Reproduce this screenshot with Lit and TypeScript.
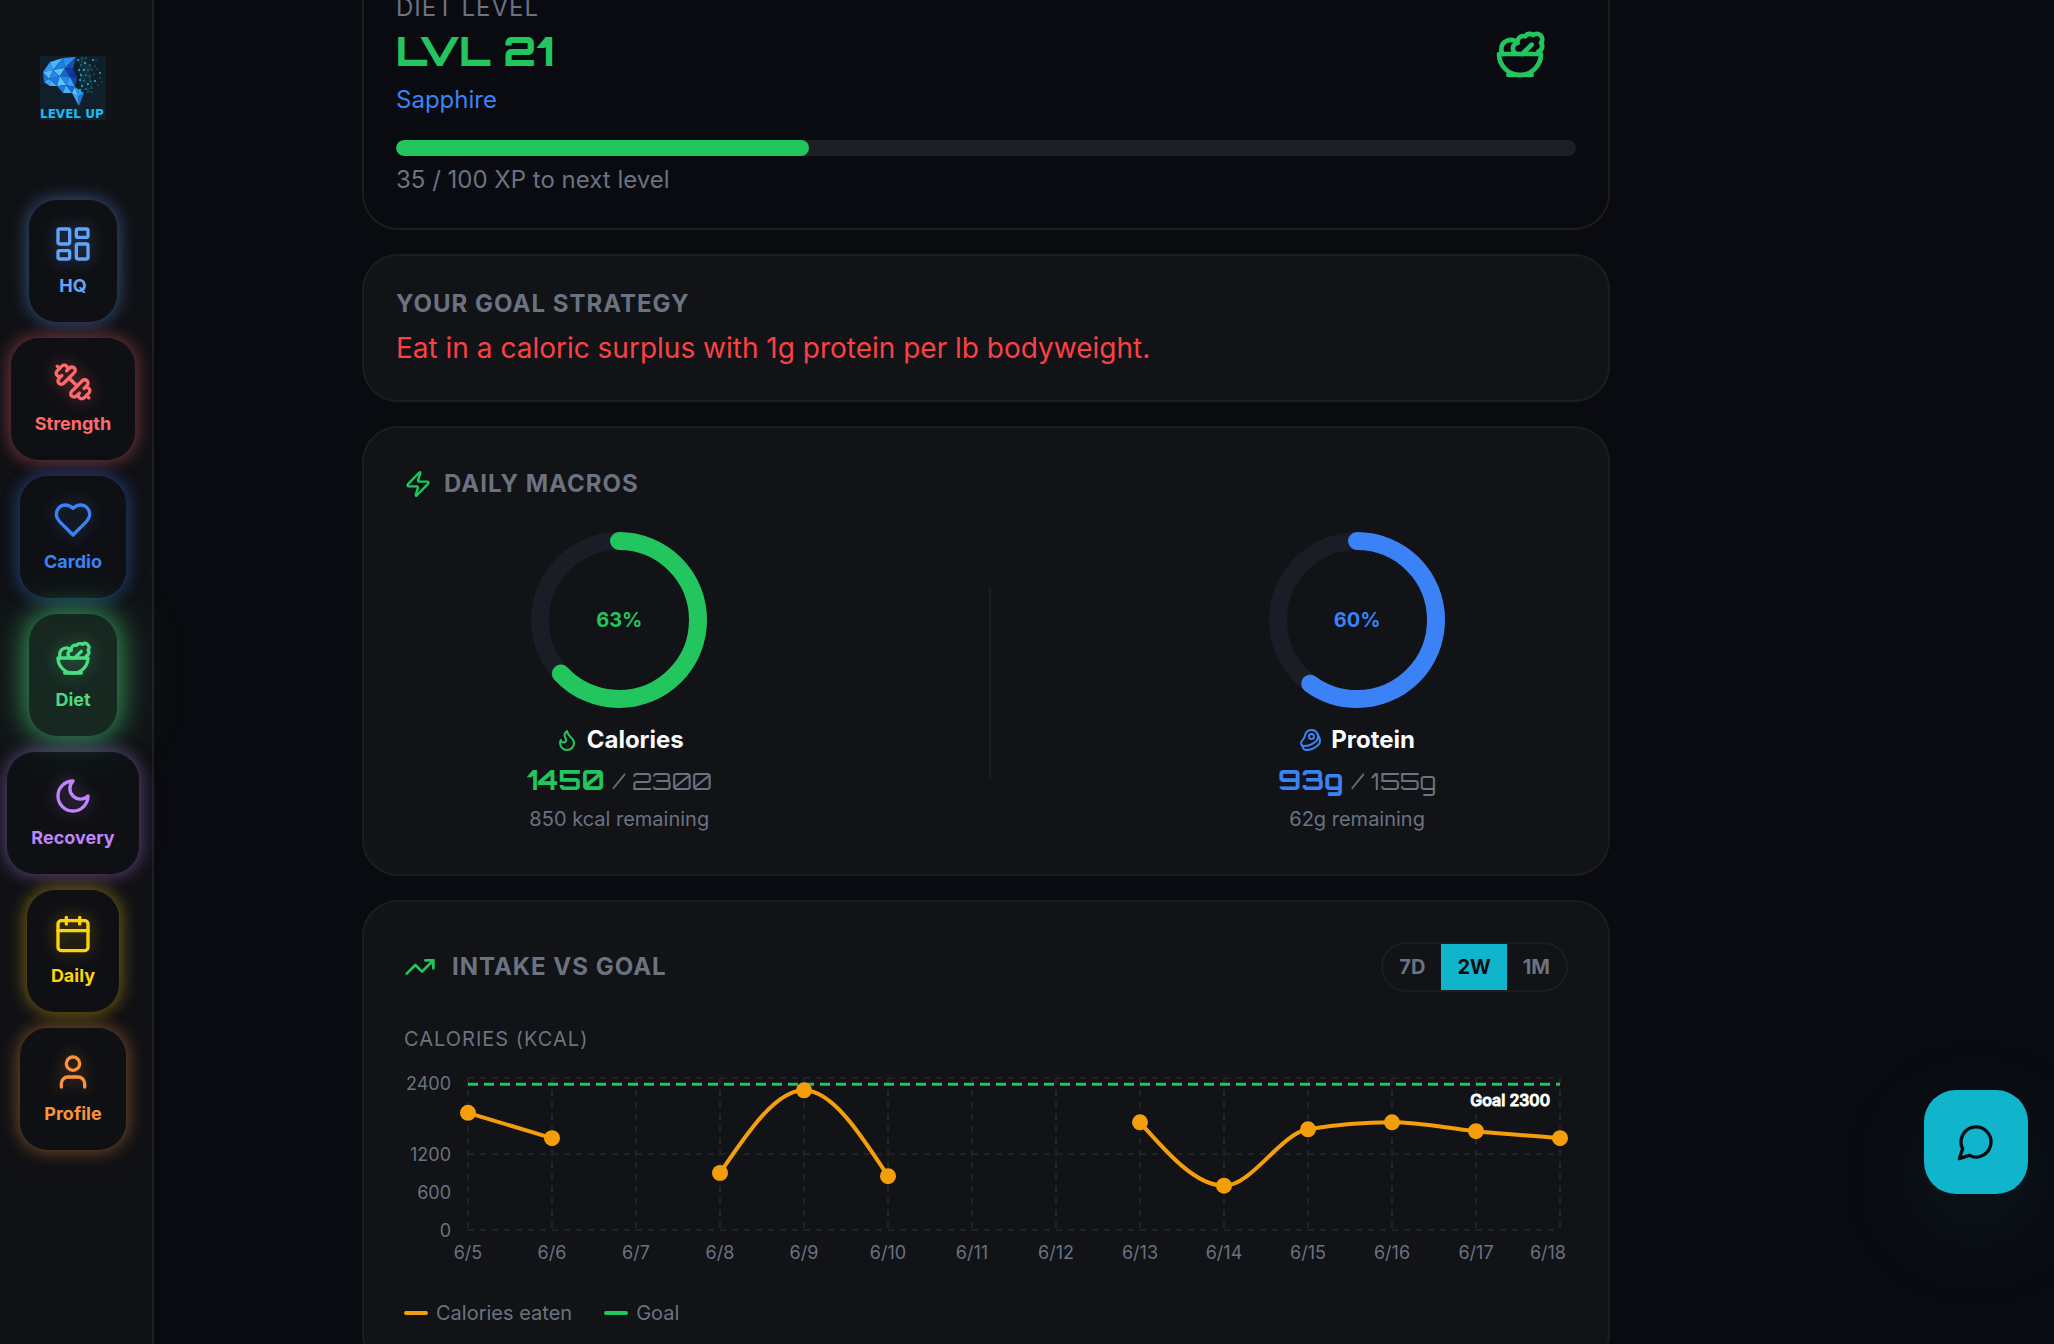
import { LitElement, html, svg, css, type SVGTemplateResult } from "lit";
import { customElement, property, state } from "lit/decorators.js";
import { classMap } from "lit/directives/class-map.js";

/* ---------- icons (24-unit grid, stroked) ---------- */

const icons: Record<string, SVGTemplateResult> = {
  dashboard: svg`<rect x="3" y="3" width="7" height="9" rx="1"/><rect x="14" y="3" width="7" height="5" rx="1"/><rect x="14" y="12" width="7" height="9" rx="1"/><rect x="3" y="16" width="7" height="5" rx="1"/>`,
  dumbbell: svg`<path d="M14.4 14.4 9.6 9.6"/><path d="M18.657 21.485a2 2 0 1 1-2.829-2.828l-1.767 1.768a2 2 0 1 1-2.829-2.829l6.364-6.364a2 2 0 1 1 2.829 2.829l-1.768 1.767a2 2 0 1 1 2.828 2.829z"/><path d="m21.5 21.5-1.4-1.4"/><path d="M3.9 3.9 2.5 2.5"/><path d="M6.404 12.768a2 2 0 1 1-2.829-2.829l1.768-1.767a2 2 0 1 1-2.828-2.829l2.828-2.828a2 2 0 1 1 2.829 2.828l1.767-1.768a2 2 0 1 1 2.829 2.829z"/>`,
  heart: svg`<path d="M19 14c1.49-1.46 3-3.21 3-5.5A5.5 5.5 0 0 0 16.5 3c-1.76 0-3 .5-4.5 2-1.5-1.5-2.74-2-4.5-2A5.5 5.5 0 0 0 2 8.5c0 2.3 1.5 4.05 3 5.5l7 7Z"/>`,
  salad: svg`<path d="M7 21h10"/><path d="M12 21a9 9 0 0 0 9-9H3a9 9 0 0 0 9 9Z"/><path d="M11.38 12a2.4 2.4 0 0 1-.4-4.77 2.4 2.4 0 0 1 3.2-2.77 2.4 2.4 0 0 1 3.47-.63 2.4 2.4 0 0 1 3.37 3.37 2.4 2.4 0 0 1-1.1 3.7 2.51 2.51 0 0 1 .03 1.1"/><path d="m13 12 4-4"/><path d="M10.9 7.25A3.99 3.99 0 0 0 4 10c0 .73.2 1.41.54 2"/>`,
  moon: svg`<path d="M12 3a6 6 0 0 0 9 9 9 9 0 1 1-9-9Z"/>`,
  calendar: svg`<path d="M8 2v4"/><path d="M16 2v4"/><rect x="3" y="4" width="18" height="18" rx="2"/><path d="M3 10h18"/>`,
  user: svg`<path d="M19 21v-2a4 4 0 0 0-4-4H9a4 4 0 0 0-4 4v2"/><circle cx="12" cy="7" r="4"/>`,
  zap: svg`<path d="M4 14a1 1 0 0 1-.78-1.63l9.9-10.2a.5.5 0 0 1 .86.46l-1.92 6.02A1 1 0 0 0 13 10h7a1 1 0 0 1 .78 1.63l-9.9 10.2a.5.5 0 0 1-.86-.46l1.92-6.02A1 1 0 0 0 11 14z"/>`,
  trend: svg`<path d="M16 7h6v6"/><path d="m22 7-8.5 8.5-5-5L2 17"/>`,
  flame: svg`<path d="M8.5 14.5A2.5 2.5 0 0 0 11 12c0-1.38-.5-2-1-3-1.072-2.143-.224-4.054 2-6 .5 2.5 2 4.9 4 6.5 2 1.6 3 3.5 3 5.5a7 7 0 1 1-14 0c0-1.153.433-2.294 1-3a2.5 2.5 0 0 0 2.5 2.5z"/>`,
  beef: svg`<circle cx="12.5" cy="8.5" r="2.5"/><path d="M12.5 2a6.5 6.5 0 0 0-6.22 4.6c-1.1 3.13-.78 3.9-3.18 6.08A3 3 0 0 0 5 18c4 0 8.4-1.8 11.4-4.3A6.5 6.5 0 0 0 12.5 2Z"/><path d="m18.5 6 2.19 4.5a6.48 6.48 0 0 1 .31 2 6.49 6.49 0 0 1-2.6 5.2C15.4 20.2 11 22 7 22a3 3 0 0 1-2.68-1.66L2.4 16.5"/>`,
  chat: svg`<path d="M7.9 20A9 9 0 1 0 4 16.1L2 22Z"/>`,
};

@customElement("lu-icon")
export class LuIcon extends LitElement {
  @property() name = "zap";
  static styles = css`
    :host { display: block; flex: none; width: 24px; height: 24px; }
    .glyph { display: block; width: 100%; height: 100%; overflow: visible; }
  `;
  render() {
    return html`<svg class="glyph" viewBox="0 0 24 24" fill="none" stroke="currentColor"
      stroke-width="2" stroke-linecap="round" stroke-linejoin="round" aria-hidden="true">${icons[this.name]}</svg>`;
  }
}

/* ---------- brand mark ---------- */

const facets: [string, string][] = [
  ["3,16 10,6 13,14", "#2f9bf0"], ["10,6 23,2 13,14", "#49b4ff"], ["23,2 25,12 13,14", "#1e7fe0"],
  ["23,2 36,1 25,12", "#2b8ff0"], ["36,1 33,12 25,12", "#1550c0"], ["3,16 13,14 9,23", "#56bcff"],
  ["3,16 9,23 4,26", "#1d72d8"], ["13,14 20,20 9,23", "#2a86ea"], ["13,14 25,12 20,20", "#57c3ff"],
  ["25,12 30,21 20,20", "#1763cf"], ["25,12 33,12 30,21", "#0d3ea6"], ["33,12 37,22 30,21", "#12339a"],
  ["4,26 9,23 10,30", "#3fa6fb"], ["9,23 20,20 17,30", "#1f78df"], ["9,23 17,30 10,30", "#48b0ff"],
  ["20,20 26,29 17,30", "#5cc8ff"], ["20,20 30,21 26,29", "#2688ec"], ["30,21 37,22 35,31", "#0f46b0"],
  ["30,21 35,31 26,29", "#3aa0f8"], ["17,30 26,29 23,37", "#2276de"], ["26,29 32,37 23,37", "#44b6ff"],
  ["26,29 35,31 32,37", "#1a66d2"], ["35,31 44,37 38,41", "#2f93f2"], ["35,31 38,41 32,37", "#57c0ff"],
  ["38,41 44,37 39,50", "#1f74dc"], ["32,37 38,41 39,50", "#3da4fa"],
];
const nodes: [number, number, number][] = [
  [38, 4, 1], [42, 2, 0], [46, 2, 0], [53, 4, 1], [56, 4, 0], [41, 9, 0], [45, 7, 1], [50, 9, 0], [55, 10, 0],
  [39, 14, 1], [44, 14, 1], [48, 14, 0], [52, 14, 0], [57, 13, 0], [60, 17, 1], [41, 19, 1], [46, 19, 0],
  [50, 20, 0], [54, 18, 0], [55, 25, 1], [60, 22, 0], [40, 24, 1], [44, 25, 0], [48, 28, 1], [51, 25, 0],
  [58, 29, 0], [42, 30, 1], [46, 33, 0], [52, 32, 0], [40, 34, 1], [52, 36, 0], [48, 36, 0], [62, 26, 0],
];
const links: [number, number][] = [];
nodes.forEach(([x, y], i) =>
  nodes.forEach(([u, v], j) => {
    if (j > i && x < 52 && u < 53 && Math.hypot(x - u, y - v) < 8) links.push([i, j]);
  })
);

@customElement("lu-logo")
export class LuLogo extends LitElement {
  static styles = css`
    :host { display: block; }
    .mark { display: block; width: 66px; height: 64px; }
    .plate { fill: #10202b; }
    .link { stroke: #1d7f9a; stroke-width: 0.4; opacity: 0.8; }
    .node { fill: #1fc8e8; }
    .word { fill: #1cbcf4; font: 700 12px "DejaVu Sans", sans-serif; }
  `;
  render() {
    return html`<svg class="mark" viewBox="0 0 66 64" role="img" aria-label="Level Up">
      <rect class="plate" width="66" height="64" />
      ${facets.map(([p, c]) => svg`<polygon points=${p} fill=${c} />`)}
      ${links.map(([a, b]) => svg`<line class="link" x1=${nodes[a][0]} y1=${nodes[a][1]} x2=${nodes[b][0]} y2=${nodes[b][1]} />`)}
      ${nodes.map(([x, y, big]) => svg`<circle class="node" cx=${x} cy=${y} r=${big ? 0.9 : 0.5} />`)}
      <text class="word" x="0" y="62">LEVEL UP</text>
    </svg>`;
  }
}

/* ---------- sidebar ---------- */

const navItems = [
  { id: "hq", label: "HQ", icon: "dashboard" },
  { id: "strength", label: "Strength", icon: "dumbbell" },
  { id: "cardio", label: "Cardio", icon: "heart" },
  { id: "diet", label: "Diet", icon: "salad" },
  { id: "recovery", label: "Recovery", icon: "moon" },
  { id: "daily", label: "Daily", icon: "calendar" },
  { id: "profile", label: "Profile", icon: "user" },
];

@customElement("lu-sidebar")
export class LuSidebar extends LitElement {
  @property() current = "diet";
  static styles = css`
    :host {
      display: flex; flex-direction: column; align-items: center; flex: none; box-sizing: border-box;
      width: 154px; padding: 56px 14px 0 8px; gap: 80px;
      background: #111216; border-right: 2px solid #1e1f23;
    }
    .nav { display: flex; flex-direction: column; align-items: center; gap: 16px; }
    .item {
      display: flex; flex-direction: column; align-items: center; gap: 8px;
      padding: 24px 24px 22px; border-radius: 28px; text-decoration: none;
      font-size: 18px; line-height: 28px; font-weight: 700;
      color: rgb(var(--tone)); background: rgba(12, 14, 18, 0.4);
      box-shadow: 0 0 16px 2px rgba(var(--tone), 0.38), 0 0 36px rgba(var(--tone), 0.05);
    }
    .item lu-icon { width: 40px; height: 40px; filter: drop-shadow(0 0 8px rgba(var(--tone), 0.4)); }
    .hq { --tone: 96, 165, 250; }
    .strength { --tone: 255, 107, 107; }
    .cardio { --tone: 59, 130, 246; }
    .diet { --tone: 74, 222, 128; }
    .recovery { --tone: 192, 132, 252; }
    .daily { --tone: 255, 211, 10; }
    .profile { --tone: 251, 146, 60; }
    .current {
      background: rgba(var(--tone), 0.11);
      box-shadow: 0 0 26px 3px rgba(var(--tone), 0.6), 0 0 70px rgba(var(--tone), 0.18);
    }
  `;
  render() {
    return html`<lu-logo></lu-logo>
      <nav class="nav" aria-label="Main">
        ${navItems.map(
          (n) => html`<a href="#${n.id}" class="item ${n.id} ${n.id === this.current ? "current" : ""}"
            aria-current=${n.id === this.current ? "page" : "false"}><lu-icon name=${n.icon}></lu-icon><span>${n.label}</span></a>`
        )}
      </nav>`;
  }
}

/* ---------- macro ring ---------- */

@customElement("lu-macro")
export class LuMacro extends LitElement {
  @property() label = "";
  @property() icon = "";
  @property() unit = "";
  @property() note = "";
  @property({ type: Number }) value = 0;
  @property({ type: Number }) goal = 1;
  static styles = css`
    :host { display: flex; flex-direction: column; align-items: center; gap: 8px; }
    .dial { display: grid; place-items: center; margin-bottom: 8px; }
    .ring { grid-area: 1 / 1; display: block; width: 176px; height: 176px; }
    .track, .arc { fill: none; stroke-width: 18; }
    .track { stroke: #1a1d25; }
    .arc { stroke: currentColor; stroke-linecap: round; }
    .pct { grid-area: 1 / 1; font-size: 20px; line-height: 30px; font-weight: 700; }
    .name { display: flex; align-items: center; gap: 8px; }
    .label { color: #f8fafc; font-size: 24px; line-height: 32px; font-weight: 700; }
    .amount { display: flex; align-items: baseline; gap: 8px; height: 32px; line-height: 32px; font-family: Orbitron, "DejaVu Sans", sans-serif; }
    .now { font-size: 28px; font-weight: 700; }
    .of { font-size: 24px; color: #6b7280; }
    .note { font-size: 20px; line-height: 30px; color: #6b7280; }
  `;
  render() {
    const share = this.value / this.goal;
    const turn = 2 * Math.PI * 79;
    return html`<div class="dial">
        <svg class="ring" viewBox="0 0 176 176" aria-hidden="true">
          <circle class="track" cx="88" cy="88" r="79" />
          <circle class="arc" cx="88" cy="88" r="79" transform="rotate(-90 88 88)"
            stroke-dasharray="${share * turn} ${turn}" />
        </svg>
        <span class="pct">${Math.round(share * 100)}%</span>
      </div>
      <div class="name"><lu-icon name=${this.icon}></lu-icon><span class="label">${this.label}</span></div>
      <div class="amount"><span class="now">${this.value}${this.unit}</span><span class="of">/ ${this.goal}${this.unit}</span></div>
      <div class="note">${this.goal - this.value}${this.note} remaining</div>`;
  }
}

/* ---------- intake chart ---------- */

type Point = { x: number; y: number };

const days = [5, 6, 7, 8, 9, 10, 11, 12, 13, 14, 15, 16, 17, 18].map((d) => `6/${d}`);
const intake: (number | null)[] = [1850, 1450, null, 900, 2205, 850, null, null, 1700, 700, 1590, 1700, 1560, 1450];

const plot = { left: 64, right: 1156, top: 8, bottom: 160, max: 2400 };
const px = (i: number) => plot.left + (i * (plot.right - plot.left)) / (days.length - 1);
const py = (v: number) => plot.bottom - (v / plot.max) * (plot.bottom - plot.top);

/* Monotone cubic through one unbroken run of points. */
function curve(p: Point[]): string {
  const n = p.length;
  const s = p.slice(1).map((q, i) => (q.y - p[i].y) / (q.x - p[i].x));
  const m = new Array<number>(n).fill(0);
  for (let i = 1; i < n - 1; i++) {
    const a = s[i - 1], b = s[i];
    m[i] = (Math.sign(a) + Math.sign(b)) * Math.min(Math.abs(a), Math.abs(b), Math.abs(a + b) / 4) || 0;
  }
  m[0] = n > 2 ? (3 * s[0] - m[1]) / 2 : s[0];
  m[n - 1] = n > 2 ? (3 * s[n - 2] - m[n - 2]) / 2 : s[0];
  let d = `M${p[0].x},${p[0].y}`;
  for (let i = 1; i < n; i++) {
    const h = (p[i].x - p[i - 1].x) / 3;
    d += `C${p[i - 1].x + h},${p[i - 1].y + h * m[i - 1]} ${p[i].x - h},${p[i].y - h * m[i]} ${p[i].x},${p[i].y}`;
  }
  return d;
}

function runs(values: (number | null)[]): Point[][] {
  const out: Point[][] = [];
  let run: Point[] = [];
  values.forEach((v, i) => {
    if (v === null) {
      if (run.length) out.push(run);
      run = [];
    } else run.push({ x: px(i), y: py(v) });
  });
  if (run.length) out.push(run);
  return out;
}

@customElement("lu-intake-chart")
export class LuIntakeChart extends LitElement {
  @property({ type: Number }) goal = 2300;
  static styles = css`
    :host { display: block; }
    .chart { display: block; width: 100%; height: auto; overflow: visible; }
    .grid { stroke: #212327; stroke-width: 2; stroke-dasharray: 6 6; }
    .goal { stroke: #22c55e; stroke-width: 3; stroke-dasharray: 10 6; }
    .line { fill: none; stroke: #f59e0b; stroke-width: 4; }
    .dot { fill: #f59e0b; }
    .tick { fill: #6b7280; font-size: 18px; }
    .end { text-anchor: end; }
    .mid { text-anchor: middle; }
    .tag { fill: #fff; stroke: #fff; stroke-width: 1; font-size: 16px; font-weight: 500; text-anchor: end; }
  `;
  render() {
    const series = runs(intake);
    const yTicks: [number, number][] = [[2400, 20], [1200, 91], [600, 129], [0, 167]];
    return html`<svg class="chart" viewBox="0 0 1164 200" role="img" aria-label="Calories eaten per day against the goal">
      ${[0, 1200, 2400].map((v) => svg`<line class="grid" x1=${plot.left} x2=${plot.right} y1=${py(v)} y2=${py(v)} />`)}
      ${days.map((_, i) => svg`<line class="grid" x1=${px(i)} x2=${px(i)} y1=${plot.top} y2=${plot.bottom} />`)}
      ${yTicks.map(([v, y]) => svg`<text class="tick end" x="47" y=${y}>${v}</text>`)}
      ${days.map((d, i) =>
        i === days.length - 1
          ? svg`<text class="tick end" x="1162" y="189">${d}</text>`
          : svg`<text class="tick mid" x=${px(i)} y="189">${d}</text>`)}
      <line class="goal" x1=${plot.left} x2=${plot.right} y1=${py(this.goal)} y2=${py(this.goal)} />
      <text class="tag" x="1146" y="36">Goal ${this.goal}</text>
      ${series.map((r) => svg`<path class="line" d=${curve(r)} />`)}
      ${series.flat().map((p) => svg`<circle class="dot" cx=${p.x} cy=${p.y} r="8" />`)}
    </svg>`;
  }
}

/* ---------- page ---------- */

@customElement("app-root")
export class AppRoot extends LitElement {
  @state() private range = "2W";

  static styles = css`
    :host {
      display: flex; height: 100vh; overflow: hidden;
      background: #0a0b10; color: #6b7280; font-family: Inter, sans-serif;
    }
    .main {
      flex: 1; min-width: 0; margin-top: -42px; display: grid; align-content: start;
      grid-template-columns: minmax(24px, 208fr) minmax(0, 1248px) minmax(24px, 444fr);
    }
    .stack { grid-column: 2; display: flex; flex-direction: column; gap: 24px; }
    .card { border: 2px solid #1b1d21; border-radius: 36px; padding: 32px; background: #111317; }
    .level { background: #0a0b10; }
    .roomy { padding: 40px; }
    .title { margin: 0; font-size: 24px; line-height: 32px; font-weight: 700; letter-spacing: 1px; text-transform: uppercase; }
    .plain { font-weight: 400; }
    .green { color: #22c55e; }
    .blue { color: #3b82f6; }

    .top { display: flex; align-items: center; justify-content: space-between; padding-right: 28px; }
    .rank { font: 900 40px/54px Orbitron, "DejaVu Sans", sans-serif; color: #22c55e; margin-bottom: 6px; }
    .text { font-size: 24px; line-height: 32px; }
    .bowl { width: 56px; height: 56px; color: #22c55e; }
    .bar { height: 16px; margin: 24px 0 8px; border-radius: 8px; background: #1c1e24; overflow: hidden; }
    .fill { height: 100%; border-radius: 8px; background: #22c55e; }

    .advice { margin: 8px 0 0; font-size: 28px; line-height: 40px; color: #fb4144; }

    .heading { display: flex; align-items: center; gap: 12px; }
    .heading .zap { width: 28px; height: 28px; }
    .heading .trend { width: 32px; height: 32px; }
    .wide { gap: 16px; }
    .macros { display: flex; justify-content: space-around; align-items: center; margin-top: 32px; }
    .rule { width: 2px; height: 192px; margin: 0 32px; background: #1a1c20; }

    .head { display: flex; align-items: center; justify-content: space-between; }
    .ranges { display: flex; border: 2px solid #1b1d21; border-radius: 25px; overflow: hidden; }
    .range {
      border: 0; padding: 8px 16px; background: none; cursor: pointer;
      font: 700 20px/30px Inter, sans-serif; color: #6b7280;
    }
    .on { background: #11b5cb; color: #0a0b10; }
    .caption { margin: 32px 0 16px; font-size: 20px; line-height: 30px; letter-spacing: 1px; text-transform: uppercase; }
    .legend { display: flex; gap: 32px; margin: 28px 0 0; padding: 0; list-style: none; font-size: 20px; line-height: 30px; }
    .key { display: flex; align-items: center; gap: 8px; }
    .key::before { content: ""; width: 24px; height: 4px; border-radius: 2px; background: #f59e0b; }
    .key-goal::before { background: #22c55e; }

    .chat {
      position: fixed; right: 26px; bottom: 150px; display: grid; place-items: center;
      width: 104px; height: 104px; padding: 0; border: 0; border-radius: 32px; cursor: pointer;
      background: #11b5cb; color: #0a0b10; box-shadow: 0 32px 100px rgba(17, 181, 203, 0.1);
    }
    .chat lu-icon { width: 40px; height: 40px; }
  `;

  render() {
    const xp = 35;
    return html`
      <lu-sidebar current="diet"></lu-sidebar>
      <main class="main">
        <div class="stack">
          <section class="card level">
            <div class="top">
              <div>
                <h2 class="title plain">Diet level</h2>
                <div class="rank">LVL 21</div>
                <div class="text blue">Sapphire</div>
              </div>
              <lu-icon class="bowl" name="salad"></lu-icon>
            </div>
            <div class="bar" role="progressbar" aria-label="XP to next level" aria-valuenow=${xp} aria-valuemin="0" aria-valuemax="100">
              <div class="fill" style="width: ${xp}%"></div>
            </div>
            <div class="text">${xp} / 100 XP to next level</div>
          </section>

          <section class="card">
            <h2 class="title">Your goal strategy</h2>
            <p class="advice">Eat in a caloric surplus with 1g protein per lb bodyweight.</p>
          </section>

          <section class="card roomy">
            <div class="heading"><lu-icon class="zap green" name="zap"></lu-icon><h2 class="title">Daily macros</h2></div>
            <div class="macros">
              <lu-macro class="green" label="Calories" icon="flame" note=" kcal" value="1450" goal="2300"></lu-macro>
              <div class="rule"></div>
              <lu-macro class="blue" label="Protein" icon="beef" unit="g" note="g" value="93" goal="155"></lu-macro>
            </div>
          </section>

          <section class="card roomy">
            <div class="head">
              <div class="heading wide"><lu-icon class="trend green" name="trend"></lu-icon><h2 class="title">Intake vs goal</h2></div>
              <div class="ranges" role="group" aria-label="Range">
                ${["7D", "2W", "1M"].map(
                  (r) => html`<button type="button" class=${classMap({ range: true, on: r === this.range })}
                    aria-pressed=${r === this.range} @click=${() => (this.range = r)}>${r}</button>`
                )}
              </div>
            </div>
            <div class="caption">Calories (kcal)</div>
            <lu-intake-chart goal="2300"></lu-intake-chart>
            <ul class="legend"><li class="key">Calories eaten</li><li class="key key-goal">Goal</li></ul>
          </section>
        </div>
      </main>
      <button type="button" class="chat" aria-label="Open chat"><lu-icon name="chat"></lu-icon></button>
    `;
  }
}
